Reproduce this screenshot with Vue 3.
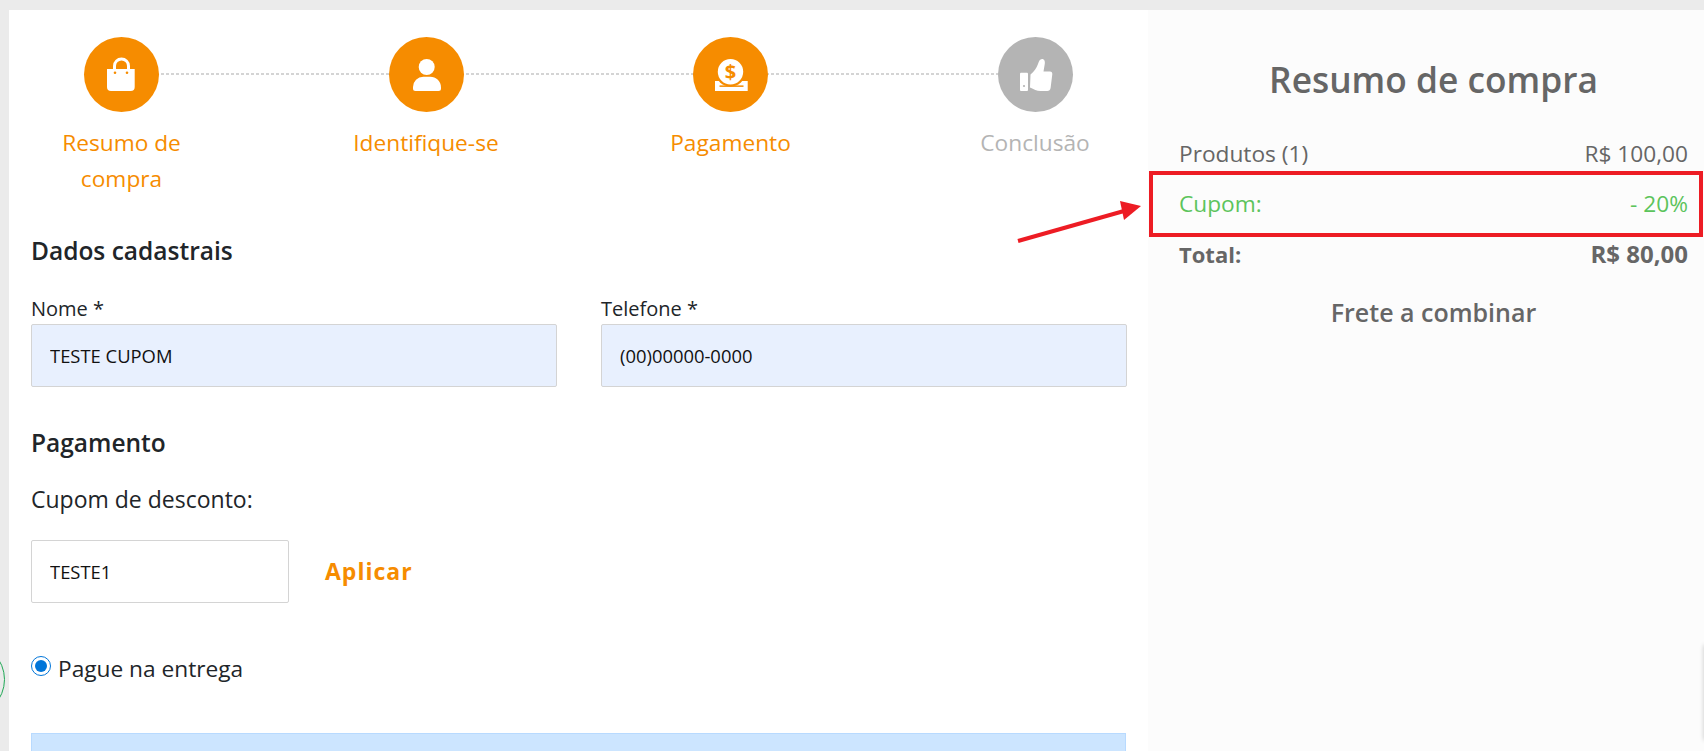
<template>
  <div class="page">
    <main class="checkout">
      <ol class="steps">
        <li v-for="step in steps" :key="step.label" class="step" :class="{ pending: !step.done }">
          <span class="bubble">
            <svg v-if="step.icon === 'bag'" viewBox="0 0 75 75">
              <path d="M30.5 33v-4a7 7 0 0 1 14 0v4" fill="none" stroke="#fff" stroke-width="3" />
              <path d="M23 32h27.7v18a4 4 0 0 1-4 4H27a4 4 0 0 1-4-4z" fill="#fff" />
              <circle cx="31" cy="35.7" r="1.3" fill="#f68c00" />
              <circle cx="43" cy="35.7" r="1.3" fill="#f68c00" />
            </svg>
            <svg v-else-if="step.icon === 'user'" viewBox="0 0 75 75">
              <circle cx="37.7" cy="30" r="8" fill="#fff" />
              <path d="M24 50a10.3 10.3 0 0 1 10.3-10.3h6.900A10.800 10.800 0 0 1 52 50.500v1a2.500 2.500 0 0 1-2.500 2.500h-23a2.500 2.500 0 0 1-2.500-2.500z" fill="#fff" />
            </svg>
            <svg v-else-if="step.icon === 'coin'" viewBox="0 0 75 75">
              <rect x="22" y="44" width="32.7" height="10" fill="#fff" />
              <circle cx="37.5" cy="34.7" r="15" fill="#f68c00" />
              <circle cx="37.5" cy="34.7" r="12.7" fill="#fff" />
              <rect x="26.5" y="48.4" width="24" height="1.5" fill="#f68c00" />
              <text x="37.5" y="41.500" text-anchor="middle" class="dollar">$</text>
            </svg>
            <svg v-else viewBox="0 0 75 75">
              <rect x="22" y="35.7" width="8" height="18.3" rx="1" fill="#fff" />
              <circle cx="26" cy="49" r="1.1" fill="#b4b4b4" />
              <path d="M32.500 37.500c3.500-3 6-6.500 7.500-10.500c.8-2.500 1.800-5 4-5c2.400 0 3.200 2.300 2.800 4.800l-1.300 7.700h6.500c1.600 0 2.500 1.300 2.300 2.800l-1.700 13.700c-.3 1.900-1.500 3-3.300 3h-6.800c-4 0-6.500-1.600-10.500-3.500z" fill="#fff" />
            </svg>
          </span>
          <span class="step-label">{{ step.label }}</span>
        </li>
      </ol>

      <h2 class="section-title">Dados cadastrais</h2>
      <div class="fields">
        <label class="field">
          <span>Nome *</span>
          <input class="filled" type="text" value="TESTE CUPOM" />
        </label>
        <label class="field">
          <span>Telefone *</span>
          <input class="filled" type="text" value="(00)00000-0000" />
        </label>
      </div>

      <h2 class="section-title pay-title">Pagamento</h2>
      <p class="coupon-label">Cupom de desconto:</p>
      <div class="coupon-row">
        <input class="coupon-input" type="text" value="TESTE1" />
        <button class="apply" type="button">Aplicar</button>
      </div>

      <label class="pay-option">
        <input type="radio" name="pay" checked />
        <span>Pague na entrega</span>
      </label>
      <div class="notice"></div>
    </main>

    <aside class="summary">
      <h1>Resumo de compra</h1>
      <div class="line"><span>Produtos (1)</span><span>R$ 100,00</span></div>
      <div class="line coupon"><span>Cupom:</span><span>- 20%</span></div>
      <div class="line total"><span>Total:</span><span>R$ 80,00</span></div>
      <p class="shipping">Frete a combinar</p>
    </aside>

    <span class="chat-edge"></span>
    <span class="side-edge"></span>

    <svg class="markup" width="1704" height="751" viewBox="0 0 1704 751">
      <rect x="1151" y="173" width="550" height="62" fill="none" stroke="#ed1c24" stroke-width="4" />
      <path d="M1018 241L1124 211" fill="none" stroke="#ed1c24" stroke-width="4" />
      <path d="M1141 206L1120 201L1124 220z" fill="#ed1c24" />
    </svg>
  </div>
</template>

<script setup>
const steps = [
  { label: 'Resumo de compra', icon: 'bag', done: true },
  { label: 'Identifique-se', icon: 'user', done: true },
  { label: 'Pagamento', icon: 'coin', done: true },
  { label: 'Conclusão', icon: 'thumb', done: false }
]
</script>

<style>
html, body {
  margin: 0;
  overflow: hidden;
}
</style>

<style scoped>
.page {
  position: relative;
  display: flex;
  height: 741px;
  padding: 10px 0 0 9px;
  overflow: hidden;
  background: #ebebeb;
  font-family: "Open Sans", "Noto Sans", sans-serif;
  color: #212529;
}

.checkout {
  width: 1139px;
  box-sizing: border-box;
  padding: 27px 21px 0 22px;
  background: #fff;
}

.steps {
  display: flex;
  justify-content: space-between;
  margin: 0;
  padding: 0 7px 0 5.500px;
  list-style: none;
  background: repeating-linear-gradient(90deg, #d4d4d4 0 3px, transparent 3px 5px) 100px 36px / 900px 2px no-repeat;
}

.step {
  display: flex;
  flex-direction: column;
  align-items: center;
  width: 170px;
  text-align: center;
  color: #f68c00;
}

.step.pending {
  color: #b4b4b4;
}

.bubble {
  width: 75px;
  height: 75px;
  border-radius: 50%;
  background: #f68c00;
}

.pending .bubble {
  background: #b4b4b4;
}

.bubble svg {
  display: block;
  width: 75px;
  height: 75px;
}

.dollar {
  font-size: 20px;
  font-weight: 700;
  fill: #f68c00;
}

.step-label {
  margin-top: 13px;
  font-size: 22.700px;
  line-height: 36px;
}

.section-title {
  margin: 39px 0 0;
  font-size: 24.500px;
  line-height: 30px;
  font-weight: 600;
}

.fields {
  display: grid;
  grid-template-columns: 526px 526px;
  gap: 44px;
  margin-top: 30px;
}

.field {
  display: flex;
  flex-direction: column;
  font-size: 20px;
}

.field span {
  margin-bottom: 2px;
  line-height: 26px;
}

input[type="text"] {
  box-sizing: border-box;
  height: 63px;
  padding: 0 18px;
  border: 1px solid #d4d4d4;
  border-radius: 2px;
  font: 18.400px "Open Sans", "Noto Sans", sans-serif;
  color: #111;
}

.filled {
  width: 100%;
  background: #e8f0fe;
}

.pay-title {
  margin-top: 41px;
}

.coupon-label {
  margin: 26px 0 0;
  font-size: 23px;
  line-height: 30px;
}

.coupon-row {
  display: flex;
  align-items: center;
  gap: 36px;
  margin-top: 26px;
}

.coupon-input {
  width: 258px;
  background: #fff;
}

.apply {
  padding: 0 0 1px;
  border: 0;
  background: none;
  font: 700 23px "Open Sans", "Noto Sans", sans-serif;
  letter-spacing: 1px;
  color: #f68c00;
}

.pay-option {
  display: flex;
  align-items: center;
  gap: 7px;
  margin-top: 50px;
  font-size: 22.700px;
  line-height: 32px;
}

.pay-option input {
  width: 20px;
  height: 20px;
  margin: -6px 0 0;
  accent-color: #0075d9;
}

.notice {
  height: 60px;
  margin-top: 48px;
  box-sizing: border-box;
  width: 1095px;
  border: 1px solid #b8daff;
  background: #cce5ff;
}

.summary {
  flex: 1;
  box-sizing: border-box;
  padding: 0 16px 0 31px;
  background: #fcfcfc;
  color: #666;
}

.summary h1 {
  margin: 39.500px 0 0;
  font-size: 35.300px;
  line-height: 58px;
  font-weight: 600;
  text-align: center;
}

.line {
  display: flex;
  justify-content: space-between;
  font-size: 22.700px;
  line-height: 30px;
}

.line:first-of-type {
  margin-top: 31px;
}

.coupon {
  margin-top: 20px;
  color: #5cc45c;
}

.total {
  margin-top: 20px;
  font-size: 22px;
  font-weight: 700;
}

.total span:last-child {
  font-size: 24px;
}

.shipping {
  margin: 27px 0 0;
  font-size: 25px;
  line-height: 32px;
  font-weight: 600;
  text-align: center;
}

.chat-edge {
  position: absolute;
  left: -70px;
  top: 642px;
  width: 73px;
  height: 73px;
  border: 1.500px solid #1fa855;
  border-radius: 50%;
}

.side-edge {
  position: absolute;
  right: -2px;
  top: 645px;
  width: 2px;
  height: 95px;
  box-shadow: 0 0 4px rgba(0, 0, 0, .3);
}

.markup {
  position: absolute;
  left: 0;
  top: 0;
  pointer-events: none;
}
</style>
